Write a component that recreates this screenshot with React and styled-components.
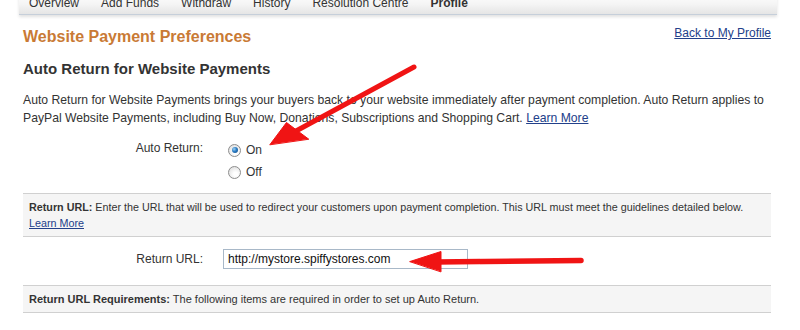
import React from "react";
import styled, { createGlobalStyle } from "styled-components";

const GlobalStyle = createGlobalStyle`
  body {
    margin: 0;
    background: #fff;
    font-family: "Liberation Sans", Arial, sans-serif;
    color: #333;
  }
`;

const Page = styled.div`
  position: relative;
  display: flex;
  flex-direction: column;
  width: 800px;
  height: 330px;
  overflow: hidden;
  padding: 0 23px 0 19px;
  box-sizing: border-box;
`;

const NavBar = styled.ul`
  display: flex;
  gap: 22px;
  margin: -7px 0 0;
  padding: 0 0 0 10px;
  list-style: none;
  height: 21px;
  background: linear-gradient(#fff, #f4f4f4 55%, #e5e5e5);
  border-bottom: 1px solid #c6cfda;
  box-shadow: 0 2px 3px rgba(0, 0, 0, 0.12);
`;

const NavItem = styled.li`
  font-size: 12px;
  line-height: 20px;
  color: #333;
  font-weight: ${(p) => (p.$active ? "bold" : "normal")};
`;

const Content = styled.div`
  padding: 0 6px 0 4px;
`;

const TitleRow = styled.div`
  display: flex;
  justify-content: space-between;
  align-items: flex-start;
  margin-top: 10px;
`;

const Title = styled.h1`
  margin: 2px 0 0;
  font-size: 16px;
  line-height: 20px;
  font-weight: bold;
  color: #c97a35;
`;

const Link = styled.a`
  color: #22408a;
  text-decoration: underline;
  font-size: ${(p) => p.$size || "inherit"};
  cursor: pointer;
`;

const BackLink = styled(Link)`
  font-size: 12px;
  line-height: 16px;
`;

const SubHeading = styled.h2`
  margin: 13px 0 0;
  font-size: 15px;
  line-height: 18px;
  font-weight: bold;
  color: #333;
`;

const Intro = styled.p`
  margin: 13px 0 0;
  font-size: 12.2px;
  line-height: 18px;
`;

const FormRow = styled.div`
  display: grid;
  grid-template-columns: 180px 1fr;
  column-gap: ${(p) => p.$gap}px;
  align-items: ${(p) => p.$align || "start"};
  margin-top: ${(p) => p.$top}px;
`;

const Label = styled.label`
  text-align: right;
  font-size: 12px;
  line-height: 18px;
`;

const RadioGroup = styled.div`
  display: flex;
  flex-direction: column;
`;

const RadioOption = styled.label`
  display: flex;
  align-items: center;
  gap: 5px;
  height: 22px;
  font-size: 12px;
`;

const Radio = styled.span`
  position: relative;
  width: 13px;
  height: 13px;
  box-sizing: border-box;
  border-radius: 50%;
  border: 1px solid #8d8d8d;
  background: radial-gradient(circle at 60% 65%, #fff 20%, #dcdcdc 90%);

  &::after {
    content: "";
    display: ${(p) => (p.$checked ? "block" : "none")};
    position: absolute;
    left: 2.5px;
    top: 2.5px;
    width: 6px;
    height: 6px;
    border-radius: 50%;
    background: radial-gradient(circle at 35% 35%, #9fd2f3 0%, #2a7cc4 45%, #13457e 100%);
  }
`;

const Notice = styled.div`
  margin-top: ${(p) => p.$top}px;
  padding: 5px 6px;
  background: #f5f5f5;
  border-top: 1px solid #d0d0d0;
  border-bottom: 1px solid #d0d0d0;
  font-size: ${(p) => p.$size || "11px"};
  line-height: 16px;
  color: #333;
`;

const UrlInput = styled.input`
  width: 245px;
  height: 20px;
  box-sizing: border-box;
  border: 1px solid #a8b8c8;
  padding: 0 4px;
  font-family: "Liberation Sans", Arial, sans-serif;
  font-size: 12px;
  color: #111;
  outline: none;
`;

const Arrows = styled.svg`
  position: absolute;
  left: 0;
  top: 0;
  pointer-events: none;
`;

function RedArrows() {
  return (
    <Arrows width="800" height="330" viewBox="0 0 800 330">
      <g fill="#f01414" stroke="#f01414" strokeLinecap="round">
        <line x1="414" y1="67" x2="296" y2="131" strokeWidth="5" />
        <polygon points="270,144.5 286.5,122.5 308.5,139" strokeWidth="1" />
        <line x1="581" y1="260.5" x2="436" y2="262" strokeWidth="5.5" />
        <polygon points="410,261.5 441,251.5 441,271.5" strokeWidth="1" />
      </g>
    </Arrows>
  );
}

const tabs = ["Overview", "Add Funds", "Withdraw", "History", "Resolution Centre", "Profile"];

export default function App() {
  return (
    <Page>
      <GlobalStyle />
      <NavBar>
        {tabs.map((t) => (
          <NavItem key={t} $active={t === "Profile"}>
            {t}
          </NavItem>
        ))}
      </NavBar>
      <Content>
        <TitleRow>
          <Title>Website Payment Preferences</Title>
          <BackLink>Back to My Profile</BackLink>
        </TitleRow>
        <SubHeading>Auto Return for Website Payments</SubHeading>
        <Intro>
          Auto Return for Website Payments brings your buyers back to your website immediately after
          payment completion. Auto Return applies to PayPal Website Payments, including Buy Now,
          Donations, Subscriptions and Shopping Cart. <Link>Learn More</Link>
        </Intro>
        <FormRow $gap={25} $top={12}>
          <Label>Auto Return:</Label>
          <RadioGroup>
            <RadioOption>
              <Radio $checked />
              On
            </RadioOption>
            <RadioOption>
              <Radio />
              Off
            </RadioOption>
          </RadioGroup>
        </FormRow>
        <Notice $top={10} $size="10.75px">
          <b>Return URL:</b> Enter the URL that will be used to redirect your customers upon payment
          completion. This URL must meet the guidelines detailed below.{" "}
          <Link>Learn More</Link>
        </Notice>
        <FormRow $gap={20} $top={12} $align="center">
          <Label>Return URL:</Label>
          <UrlInput defaultValue="http://mystore.spiffystores.com" />
        </FormRow>
        <Notice $top={16}>
          <b>Return URL Requirements:</b> The following items are required in order to set up Auto
          Return.
        </Notice>
      </Content>
      <RedArrows />
    </Page>
  );
}
